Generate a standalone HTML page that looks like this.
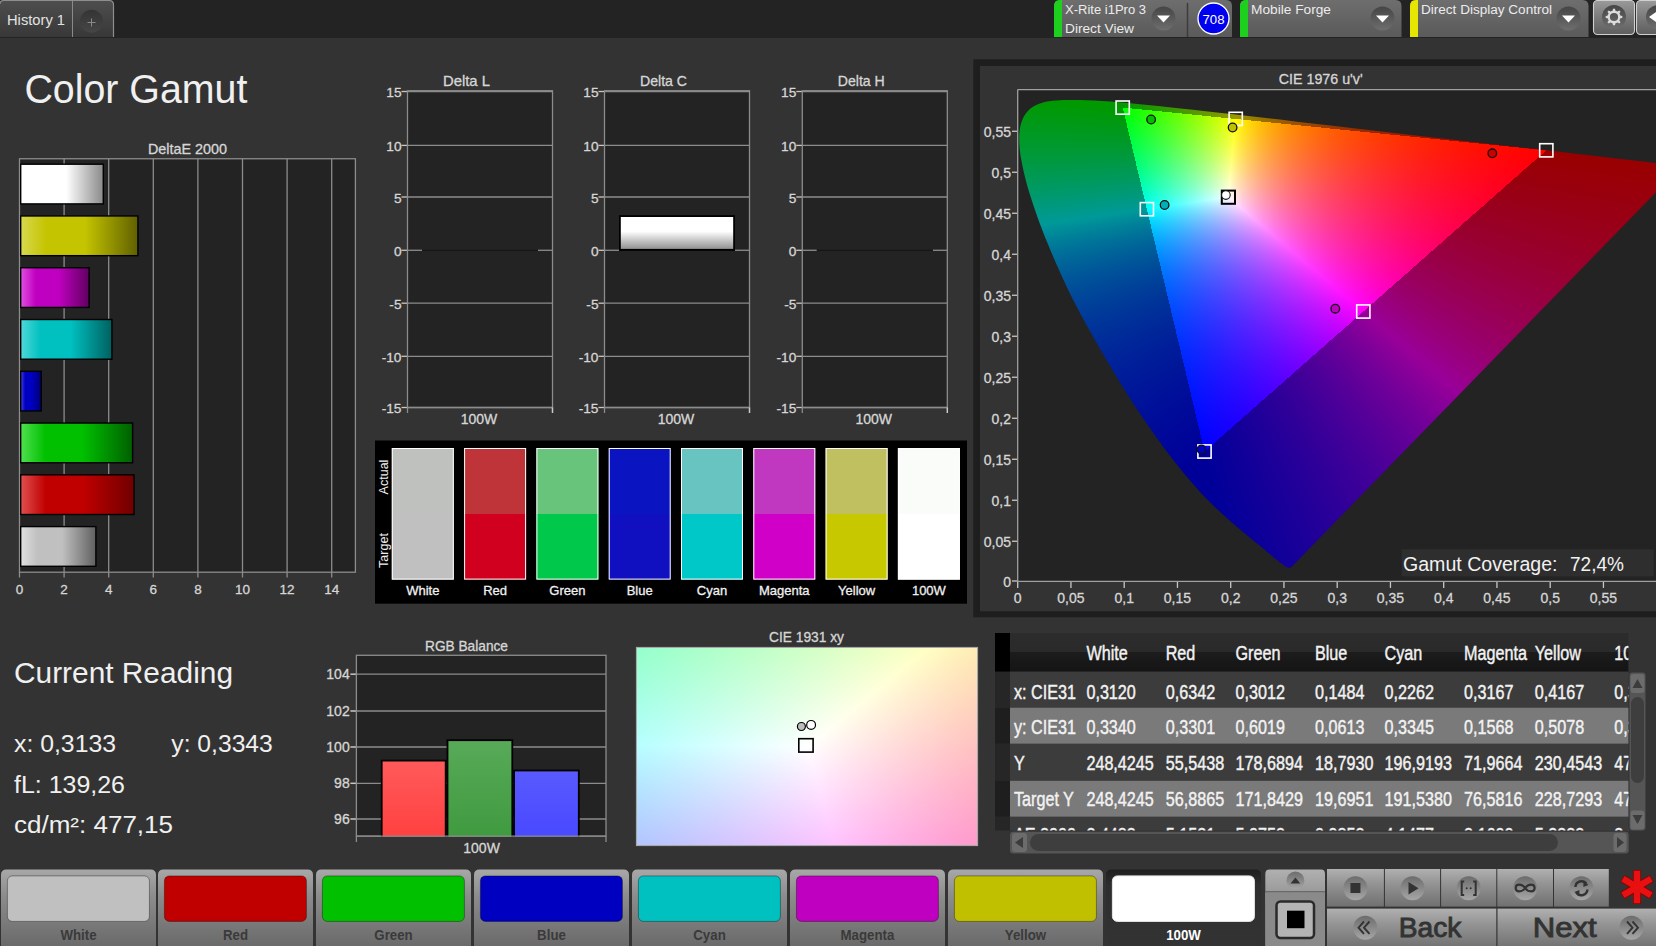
<!DOCTYPE html>
<html><head><meta charset="utf-8"><title>Color Gamut</title>
<style>
html,body{margin:0;padding:0;background:#333333;width:1656px;height:946px;overflow:hidden;}
svg{position:absolute;left:0;top:0;font-family:"Liberation Sans", sans-serif;}
canvas{position:absolute;}
</style></head><body>
<svg width="1656" height="946" viewBox="0 0 1656 946"><defs><linearGradient id="tabg" x1="0" y1="0" x2="0" y2="1"><stop offset="0" stop-color="#4e4e4e"/><stop offset="1" stop-color="#383838"/></linearGradient><radialGradient id="plusg" cx="0.5" cy="0.35" r="0.6"><stop offset="0" stop-color="#3a3a3a"/><stop offset="1" stop-color="#444"/></radialGradient><linearGradient id="plg" x1="0" y1="0" x2="0" y2="1"><stop offset="0" stop-color="#343434"/><stop offset="1" stop-color="#464646"/></linearGradient><linearGradient id="ctlg" x1="0" y1="0" x2="0" y2="1"><stop offset="0" stop-color="#6e6e6e"/><stop offset="1" stop-color="#5a5a5a"/></linearGradient><linearGradient id="ddg" x1="0" y1="0" x2="0" y2="1"><stop offset="0" stop-color="#454545"/><stop offset="1" stop-color="#6e6e6e"/></linearGradient><linearGradient id="btng" x1="0" y1="0" x2="0" y2="1"><stop offset="0" stop-color="#9a9a9a"/><stop offset="0.5" stop-color="#7a7a7a"/><stop offset="1" stop-color="#5e5e5e"/></linearGradient><linearGradient id="bg_white" x1="0" y1="0" x2="1" y2="0"><stop offset="0" stop-color="#ffffff"/><stop offset="0.22" stop-color="#ffffff"/><stop offset="0.55" stop-color="#ffffff"/><stop offset="1" stop-color="#8a8a8a"/></linearGradient><linearGradient id="bg_yellow" x1="0" y1="0" x2="1" y2="0"><stop offset="0" stop-color="#d8d850"/><stop offset="0.22" stop-color="#c4c400"/><stop offset="0.55" stop-color="#c4c400"/><stop offset="1" stop-color="#606000"/></linearGradient><linearGradient id="bg_magenta" x1="0" y1="0" x2="1" y2="0"><stop offset="0" stop-color="#e050e0"/><stop offset="0.22" stop-color="#c000c0"/><stop offset="0.55" stop-color="#c000c0"/><stop offset="1" stop-color="#600060"/></linearGradient><linearGradient id="bg_cyan" x1="0" y1="0" x2="1" y2="0"><stop offset="0" stop-color="#50d8d8"/><stop offset="0.22" stop-color="#00c0c0"/><stop offset="0.55" stop-color="#00c0c0"/><stop offset="1" stop-color="#006060"/></linearGradient><linearGradient id="bg_blue" x1="0" y1="0" x2="1" y2="0"><stop offset="0" stop-color="#4040e0"/><stop offset="0.22" stop-color="#0000c0"/><stop offset="0.55" stop-color="#0000c0"/><stop offset="1" stop-color="#000070"/></linearGradient><linearGradient id="bg_green" x1="0" y1="0" x2="1" y2="0"><stop offset="0" stop-color="#50e050"/><stop offset="0.22" stop-color="#00c000"/><stop offset="0.55" stop-color="#00c000"/><stop offset="1" stop-color="#006000"/></linearGradient><linearGradient id="bg_red" x1="0" y1="0" x2="1" y2="0"><stop offset="0" stop-color="#e05050"/><stop offset="0.22" stop-color="#c00000"/><stop offset="0.55" stop-color="#c00000"/><stop offset="1" stop-color="#700000"/></linearGradient><linearGradient id="bg_grey" x1="0" y1="0" x2="1" y2="0"><stop offset="0" stop-color="#e0e0e0"/><stop offset="0.22" stop-color="#c0c0c0"/><stop offset="0.55" stop-color="#c0c0c0"/><stop offset="1" stop-color="#606060"/></linearGradient><linearGradient id="dcbar" x1="0" y1="0" x2="0" y2="1"><stop offset="0" stop-color="#ffffff"/><stop offset="0.45" stop-color="#ffffff"/><stop offset="1" stop-color="#8c8c8c"/></linearGradient><linearGradient id="rbr" x1="0" y1="0" x2="0" y2="1"><stop offset="0" stop-color="#ff5a5a"/><stop offset="1" stop-color="#ff4040"/></linearGradient><linearGradient id="rbg" x1="0" y1="0" x2="0" y2="1"><stop offset="0" stop-color="#58aa58"/><stop offset="1" stop-color="#3f9a3f"/></linearGradient><linearGradient id="rbb" x1="0" y1="0" x2="0" y2="1"><stop offset="0" stop-color="#5a5aff"/><stop offset="1" stop-color="#4848ff"/></linearGradient><linearGradient id="thg" x1="0" y1="0" x2="0" y2="1"><stop offset="0" stop-color="#2c2c2c"/><stop offset="0.48" stop-color="#2a2a2a"/><stop offset="0.5" stop-color="#1c1c1c"/><stop offset="1" stop-color="#141414"/></linearGradient><clipPath id="tclip"><rect x="1010" y="633" width="618.4000000000001" height="197.5"/></clipPath><linearGradient id="bbg" x1="0" y1="0" x2="0" y2="1"><stop offset="0" stop-color="#a8a8a8"/><stop offset="0.35" stop-color="#8c8c8c"/><stop offset="1" stop-color="#6a6a6a"/></linearGradient><linearGradient id="bbsel" x1="0" y1="0" x2="0" y2="1"><stop offset="0" stop-color="#1e1e1e"/><stop offset="0.2" stop-color="#2e2e2e"/><stop offset="1" stop-color="#333333"/></linearGradient><linearGradient id="navg" x1="0" y1="0" x2="0" y2="1"><stop offset="0" stop-color="#b0b0b0"/><stop offset="0.4" stop-color="#939393"/><stop offset="1" stop-color="#707070"/></linearGradient><radialGradient id="icg" cx="0.5" cy="0.75" r="0.7"><stop offset="0" stop-color="#a8a8a8"/><stop offset="1" stop-color="#6a6a6a"/></radialGradient><linearGradient id="icg2" x1="0" y1="0" x2="0" y2="1"><stop offset="0" stop-color="#6c6c6c"/><stop offset="1" stop-color="#a6a6a6"/></linearGradient><clipPath id="cieclip"><rect x="1017.7" y="89.6" width="638.3" height="491.69999999999993"/></clipPath><clipPath id="locclip"><path d="M1291.2,567.3 L1291.0,567.3 L1290.8,567.6 L1290.4,567.6 L1290.0,567.8 L1289.5,567.8 L1288.8,567.8 L1287.9,567.9 L1286.3,567.1 L1283.5,565.2 L1279.8,562.4 L1274.4,558.0 L1267.6,552.2 L1259.1,545.1 L1247.8,535.9 L1234.3,524.5 L1217.6,509.5 L1197.6,489.2 L1171.1,457.2 L1139.8,413.4 L1105.9,359.0 L1073.2,300.1 L1047.7,243.6 L1030.4,195.9 L1021.4,160.5 L1019.2,135.8 L1022.6,118.9 L1030.8,108.1 L1042.3,102.6 L1056.0,100.6 L1071.0,100.1 L1086.2,100.3 L1102.1,101.0 L1119.2,102.3 L1137.7,104.0 L1158.1,106.0 L1180.8,108.4 L1205.8,111.2 L1233.5,114.4 L1263.9,117.9 L1297.1,121.7 L1332.9,125.8 L1370.8,130.1 L1409.7,134.6 L1447.4,139.0 L1484.1,143.2 L1517.4,147.0 L1546.8,150.4 L1571.8,153.3 L1592.7,155.6 L1610.4,157.7 L1625.7,159.5 L1638.6,161.0 L1649.1,162.1 L1657.2,163.1 L1663.6,163.8 L1668.3,164.3 L1671.4,164.7 L1673.9,165.0 L1675.9,165.2 L1677.9,165.5 L1681.6,165.9 Z"/></clipPath><clipPath id="plotclip"><rect x="1017.7" y="89.6" width="638.3" height="491.69999999999993"/></clipPath><linearGradient id="fbA" gradientUnits="userSpaceOnUse" x1="0.0" y1="100.0" x2="0.0" y2="560.0"><stop offset="0" stop-color="#009900"/><stop offset="0.25" stop-color="#008f80"/><stop offset="0.55" stop-color="#003c99"/><stop offset="1" stop-color="#1a0099"/></linearGradient><linearGradient id="fbB" gradientUnits="userSpaceOnUse" x1="1204.5" y1="451.5" x2="1546.3" y2="150.3"><stop offset="0" stop-color="#0a0099"/><stop offset="0.45" stop-color="#800099"/><stop offset="1" stop-color="#990000"/></linearGradient><linearGradient id="fbC" gradientUnits="userSpaceOnUse" x1="1122.7" y1="107.6" x2="1546.3" y2="150.3"><stop offset="0" stop-color="#009900"/><stop offset="0.3" stop-color="#999900"/><stop offset="1" stop-color="#990000"/></linearGradient><linearGradient id="fbF0" gradientUnits="userSpaceOnUse" x1="1122.7" y1="107.6" x2="1235.7" y2="118.9"><stop offset="0" stop-color="#00ff00"/><stop offset="1" stop-color="#ffff00"/></linearGradient><linearGradient id="fbF1" gradientUnits="userSpaceOnUse" x1="1235.7" y1="118.9" x2="1546.3" y2="150.3"><stop offset="0" stop-color="#ffff00"/><stop offset="1" stop-color="#ff0000"/></linearGradient><linearGradient id="fbF2" gradientUnits="userSpaceOnUse" x1="1546.3" y1="150.3" x2="1363.3" y2="311.5"><stop offset="0" stop-color="#ff0000"/><stop offset="1" stop-color="#ff00ff"/></linearGradient><linearGradient id="fbF3" gradientUnits="userSpaceOnUse" x1="1363.3" y1="311.5" x2="1204.5" y2="451.5"><stop offset="0" stop-color="#ff00ff"/><stop offset="1" stop-color="#0000ff"/></linearGradient><linearGradient id="fbF4" gradientUnits="userSpaceOnUse" x1="1204.5" y1="451.5" x2="1146.9" y2="209.2"><stop offset="0" stop-color="#0000ff"/><stop offset="1" stop-color="#00ffff"/></linearGradient><linearGradient id="fbF5" gradientUnits="userSpaceOnUse" x1="1146.9" y1="209.2" x2="1122.7" y2="107.6"><stop offset="0" stop-color="#00ffff"/><stop offset="1" stop-color="#00ff00"/></linearGradient><radialGradient id="fbW" gradientUnits="userSpaceOnUse" cx="1228.4" cy="197.2" r="110"><stop offset="0" stop-color="#fff" stop-opacity="1"/><stop offset="0.35" stop-color="#fff" stop-opacity="0.55"/><stop offset="1" stop-color="#fff" stop-opacity="0"/></radialGradient><clipPath id="triclip"><path d="M1546.3,150.3 L1122.7,107.6 L1204.5,451.5 Z"/></clipPath><linearGradient id="fb31a" x1="0" y1="0" x2="1" y2="0"><stop offset="0" stop-color="#a8ffff"/><stop offset="0.5" stop-color="#ffffff"/><stop offset="1" stop-color="#ffb8c8"/></linearGradient><linearGradient id="fb31b" x1="0" y1="0" x2="0" y2="1"><stop offset="0" stop-color="#c8ffb8" stop-opacity="0.9"/><stop offset="0.5" stop-color="#ffffff" stop-opacity="0"/><stop offset="1" stop-color="#e0b8ff" stop-opacity="0.7"/></linearGradient></defs><rect x="0" y="0" width="1656" height="38" fill="#232323" /><path d="M0,37 L0,4 Q0,0.5 4,0.5 L109,0.5 Q113.5,0.5 113.5,5 L113.5,37 Z" fill="url(#tabg)"/><path d="M0,4 Q0,0.5 4,0.5 L109,0.5 Q113.5,0.5 113.5,5 L113.5,37" fill="none" stroke="#8e8e8e" stroke-width="1.2"/><line x1="72.5" y1="1" x2="72.5" y2="37" stroke="#8a8a8a" stroke-width="1" /><circle cx="91.5" cy="21.2" r="11.5" fill="url(#plg)"/><line x1="87.5" y1="22.5" x2="95.5" y2="22.5" stroke="#8a8a8a" stroke-width="1" /><line x1="91.5" y1="18.5" x2="91.5" y2="26.5" stroke="#8a8a8a" stroke-width="1" /><text x="7" y="25" font-size="14.8" fill="#e2e2e2" text-anchor="start" textLength="58" lengthAdjust="spacingAndGlyphs" >History 1</text><path d="M1054,37 L1054,6 Q1054,0 1060,0 L1226,0 Q1232,0 1232,6 L1232,37 Z" fill="url(#ctlg)"/><path d="M1054,37 L1054,6 Q1054,0 1060,0 L1062,0 L1062,37 Z" fill="#1ed01e"/><text x="1065" y="13.5" font-size="12.5" fill="#ececec" text-anchor="start" textLength="81" lengthAdjust="spacingAndGlyphs" >X-Rite i1Pro 3</text><text x="1065" y="32.5" font-size="12.5" fill="#ececec" text-anchor="start" textLength="69" lengthAdjust="spacingAndGlyphs" >Direct View</text><circle cx="1163.5" cy="18.5" r="12" fill="url(#ddg)"/><path d="M1157.0,15.5 L1170.0,15.5 L1163.5,22.5 Z" fill="#ffffff"/><line x1="1187.5" y1="3" x2="1187.5" y2="37" stroke="#3c3c3c" stroke-width="1.5" /><circle cx="1213.5" cy="18.5" r="15.5" fill="#0000f0" stroke="#ffffff" stroke-width="1.3"/><text x="1213.5" y="23.5" font-size="13" fill="#ffffff" text-anchor="middle" textLength="22" lengthAdjust="spacingAndGlyphs" >708</text><path d="M1240,37 L1240,6 Q1240,0 1246,0 L1395.5,0 Q1401.5,0 1401.5,6 L1401.5,37 Z" fill="url(#ctlg)"/><path d="M1240,37 L1240,6 Q1240,0 1246,0 L1248,0 L1248,37 Z" fill="#1ed01e"/><text x="1251" y="13.5" font-size="12.5" fill="#ececec" text-anchor="start" textLength="80" lengthAdjust="spacingAndGlyphs" >Mobile Forge</text><circle cx="1382.5" cy="18.5" r="12" fill="url(#ddg)"/><path d="M1376.0,15.5 L1389.0,15.5 L1382.5,22.5 Z" fill="#ffffff"/><path d="M1410,37 L1410,6 Q1410,0 1416,0 L1582.5,0 Q1588.5,0 1588.5,6 L1588.5,37 Z" fill="url(#ctlg)"/><path d="M1410,37 L1410,6 Q1410,0 1416,0 L1418,0 L1418,37 Z" fill="#e6e600"/><text x="1421" y="13.5" font-size="12.5" fill="#ececec" text-anchor="start" textLength="131" lengthAdjust="spacingAndGlyphs" >Direct Display Control</text><circle cx="1568.5" cy="18.5" r="12" fill="url(#ddg)"/><path d="M1562.0,15.5 L1575.0,15.5 L1568.5,22.5 Z" fill="#ffffff"/><rect x="1593.5" y="0.5" width="41" height="34" rx="4" fill="url(#btng)" stroke="#d0d0d0" stroke-width="1.1"/><circle cx="1614" cy="17" r="12" fill="url(#ddg)"/><g transform="translate(1614,17)"><path d="M-1.6,-5 L-1,-8.3 L1,-8.3 L1.6,-5 Z" transform="rotate(0)" fill="#dcdcdc"/><path d="M-1.6,-5 L-1,-8.3 L1,-8.3 L1.6,-5 Z" transform="rotate(45)" fill="#dcdcdc"/><path d="M-1.6,-5 L-1,-8.3 L1,-8.3 L1.6,-5 Z" transform="rotate(90)" fill="#dcdcdc"/><path d="M-1.6,-5 L-1,-8.3 L1,-8.3 L1.6,-5 Z" transform="rotate(135)" fill="#dcdcdc"/><path d="M-1.6,-5 L-1,-8.3 L1,-8.3 L1.6,-5 Z" transform="rotate(180)" fill="#dcdcdc"/><path d="M-1.6,-5 L-1,-8.3 L1,-8.3 L1.6,-5 Z" transform="rotate(225)" fill="#dcdcdc"/><path d="M-1.6,-5 L-1,-8.3 L1,-8.3 L1.6,-5 Z" transform="rotate(270)" fill="#dcdcdc"/><path d="M-1.6,-5 L-1,-8.3 L1,-8.3 L1.6,-5 Z" transform="rotate(315)" fill="#dcdcdc"/><circle r="5.3" fill="none" stroke="#dcdcdc" stroke-width="2.4"/></g><rect x="1636.5" y="0.5" width="30" height="34" rx="4" fill="url(#btng)" stroke="#d0d0d0" stroke-width="1.1"/><circle cx="1658" cy="17" r="12" fill="url(#ddg)"/><path d="M1649,17 L1656,12 L1656,22 Z" fill="#ffffff"/><text x="24.4" y="103" font-size="41.5" fill="#f0f0f0" text-anchor="start" textLength="223" lengthAdjust="spacingAndGlyphs" >Color Gamut</text><text x="187.5" y="153.6" font-size="14.2" fill="#d6d6d6" text-anchor="middle" textLength="79" lengthAdjust="spacingAndGlyphs"  stroke="#d6d6d6" stroke-width="0.3">DeltaE 2000</text><rect x="19.5" y="158.75" width="335.9" height="413.45000000000005" fill="#232323" /><line x1="64.1" y1="158.75" x2="64.1" y2="572.2" stroke="#8c8c8c" stroke-width="1.3" /><line x1="108.7" y1="158.75" x2="108.7" y2="572.2" stroke="#8c8c8c" stroke-width="1.3" /><line x1="153.3" y1="158.75" x2="153.3" y2="572.2" stroke="#8c8c8c" stroke-width="1.3" /><line x1="197.9" y1="158.75" x2="197.9" y2="572.2" stroke="#8c8c8c" stroke-width="1.3" /><line x1="242.5" y1="158.75" x2="242.5" y2="572.2" stroke="#8c8c8c" stroke-width="1.3" /><line x1="287.1" y1="158.75" x2="287.1" y2="572.2" stroke="#8c8c8c" stroke-width="1.3" /><line x1="331.7" y1="158.75" x2="331.7" y2="572.2" stroke="#8c8c8c" stroke-width="1.3" /><rect x="19.5" y="158.75" width="335.9" height="413.45000000000005" fill="none" stroke="#8c8c8c" stroke-width="1.3"/><line x1="19.5" y1="572.2" x2="19.5" y2="577.5" stroke="#8c8c8c" stroke-width="1.3" /><text x="19.5" y="594" font-size="13.5" fill="#d6d6d6" text-anchor="middle"  stroke="#d6d6d6" stroke-width="0.3">0</text><line x1="64.1" y1="572.2" x2="64.1" y2="577.5" stroke="#8c8c8c" stroke-width="1.3" /><text x="64.1" y="594" font-size="13.5" fill="#d6d6d6" text-anchor="middle"  stroke="#d6d6d6" stroke-width="0.3">2</text><line x1="108.7" y1="572.2" x2="108.7" y2="577.5" stroke="#8c8c8c" stroke-width="1.3" /><text x="108.7" y="594" font-size="13.5" fill="#d6d6d6" text-anchor="middle"  stroke="#d6d6d6" stroke-width="0.3">4</text><line x1="153.3" y1="572.2" x2="153.3" y2="577.5" stroke="#8c8c8c" stroke-width="1.3" /><text x="153.3" y="594" font-size="13.5" fill="#d6d6d6" text-anchor="middle"  stroke="#d6d6d6" stroke-width="0.3">6</text><line x1="197.9" y1="572.2" x2="197.9" y2="577.5" stroke="#8c8c8c" stroke-width="1.3" /><text x="197.9" y="594" font-size="13.5" fill="#d6d6d6" text-anchor="middle"  stroke="#d6d6d6" stroke-width="0.3">8</text><line x1="242.5" y1="572.2" x2="242.5" y2="577.5" stroke="#8c8c8c" stroke-width="1.3" /><text x="242.5" y="594" font-size="13.5" fill="#d6d6d6" text-anchor="middle"  stroke="#d6d6d6" stroke-width="0.3">10</text><line x1="287.1" y1="572.2" x2="287.1" y2="577.5" stroke="#8c8c8c" stroke-width="1.3" /><text x="287.1" y="594" font-size="13.5" fill="#d6d6d6" text-anchor="middle"  stroke="#d6d6d6" stroke-width="0.3">12</text><line x1="331.7" y1="572.2" x2="331.7" y2="577.5" stroke="#8c8c8c" stroke-width="1.3" /><text x="331.7" y="594" font-size="13.5" fill="#d6d6d6" text-anchor="middle"  stroke="#d6d6d6" stroke-width="0.3">14</text><rect x="20.7" y="164.2" width="82.6" height="39.7" fill="url(#bg_white)" stroke="#000" stroke-width="1.4"/><rect x="20.7" y="215.97" width="117.19999999999999" height="39.7" fill="url(#bg_yellow)" stroke="#000" stroke-width="1.4"/><rect x="20.7" y="267.74" width="68.39999999999999" height="39.7" fill="url(#bg_magenta)" stroke="#000" stroke-width="1.4"/><rect x="20.7" y="319.51000000000005" width="91.19999999999999" height="39.7" fill="url(#bg_cyan)" stroke="#000" stroke-width="1.4"/><rect x="20.7" y="371.28000000000003" width="20.5" height="39.7" fill="url(#bg_blue)" stroke="#000" stroke-width="1.4"/><rect x="20.7" y="423.05" width="111.9" height="39.7" fill="url(#bg_green)" stroke="#000" stroke-width="1.4"/><rect x="20.7" y="474.82" width="113.29999999999998" height="39.7" fill="url(#bg_red)" stroke="#000" stroke-width="1.4"/><rect x="20.7" y="526.5900000000001" width="75.19999999999999" height="39.7" fill="url(#bg_grey)" stroke="#000" stroke-width="1.4"/><rect x="407.5" y="91.25" width="145" height="316.25" fill="#232323" /><text x="466.5" y="86" font-size="14.5" fill="#d6d6d6" text-anchor="middle" textLength="47" lengthAdjust="spacingAndGlyphs"  stroke="#d6d6d6" stroke-width="0.3">Delta L</text><line x1="407.5" y1="91.5" x2="552.5" y2="91.5" stroke="#8c8c8c" stroke-width="1.3" /><line x1="401.5" y1="91.5" x2="407.5" y2="91.5" stroke="#c8c8c8" stroke-width="1.3" /><text x="401.5" y="97.1" font-size="13.7" fill="#d6d6d6" text-anchor="end"  stroke="#d6d6d6" stroke-width="0.3">15</text><line x1="407.5" y1="145.4" x2="552.5" y2="145.4" stroke="#8c8c8c" stroke-width="1.3" /><line x1="401.5" y1="145.4" x2="407.5" y2="145.4" stroke="#c8c8c8" stroke-width="1.3" /><text x="401.5" y="151.0" font-size="13.7" fill="#d6d6d6" text-anchor="end"  stroke="#d6d6d6" stroke-width="0.3">10</text><line x1="407.5" y1="197.0" x2="552.5" y2="197.0" stroke="#8c8c8c" stroke-width="1.3" /><line x1="401.5" y1="197.0" x2="407.5" y2="197.0" stroke="#c8c8c8" stroke-width="1.3" /><text x="401.5" y="202.6" font-size="13.7" fill="#d6d6d6" text-anchor="end"  stroke="#d6d6d6" stroke-width="0.3">5</text><line x1="407.5" y1="250.3" x2="422.0" y2="250.3" stroke="#8c8c8c" stroke-width="1.3" /><line x1="538.0" y1="250.3" x2="552.5" y2="250.3" stroke="#8c8c8c" stroke-width="1.3" /><line x1="422.0" y1="250.3" x2="538.0" y2="250.3" stroke="#161616" stroke-width="1.3" /><line x1="401.5" y1="250.3" x2="407.5" y2="250.3" stroke="#c8c8c8" stroke-width="1.3" /><text x="401.5" y="255.9" font-size="13.7" fill="#d6d6d6" text-anchor="end"  stroke="#d6d6d6" stroke-width="0.3">0</text><line x1="407.5" y1="303.2" x2="552.5" y2="303.2" stroke="#8c8c8c" stroke-width="1.3" /><line x1="401.5" y1="303.2" x2="407.5" y2="303.2" stroke="#c8c8c8" stroke-width="1.3" /><text x="401.5" y="308.8" font-size="13.7" fill="#d6d6d6" text-anchor="end"  stroke="#d6d6d6" stroke-width="0.3">-5</text><line x1="407.5" y1="356.3" x2="552.5" y2="356.3" stroke="#8c8c8c" stroke-width="1.3" /><line x1="401.5" y1="356.3" x2="407.5" y2="356.3" stroke="#c8c8c8" stroke-width="1.3" /><text x="401.5" y="361.90000000000003" font-size="13.7" fill="#d6d6d6" text-anchor="end"  stroke="#d6d6d6" stroke-width="0.3">-10</text><line x1="407.5" y1="407.5" x2="552.5" y2="407.5" stroke="#8c8c8c" stroke-width="1.3" /><line x1="401.5" y1="407.5" x2="407.5" y2="407.5" stroke="#c8c8c8" stroke-width="1.3" /><text x="401.5" y="413.1" font-size="13.7" fill="#d6d6d6" text-anchor="end"  stroke="#d6d6d6" stroke-width="0.3">-15</text><rect x="407.5" y="90.75" width="145" height="316.75" fill="none" stroke="#8c8c8c" stroke-width="1.3"/><line x1="407.5" y1="407.5" x2="407.5" y2="413" stroke="#8c8c8c" stroke-width="1.3" /><line x1="552.5" y1="407.5" x2="552.5" y2="413" stroke="#c8c8c8" stroke-width="1.5" /><text x="479.0" y="424" font-size="14" fill="#d6d6d6" text-anchor="middle"  stroke="#d6d6d6" stroke-width="0.3">100W</text><rect x="604.5" y="91.25" width="145" height="316.25" fill="#232323" /><text x="663.5" y="86" font-size="14.5" fill="#d6d6d6" text-anchor="middle" textLength="47" lengthAdjust="spacingAndGlyphs"  stroke="#d6d6d6" stroke-width="0.3">Delta C</text><line x1="604.5" y1="91.5" x2="749.5" y2="91.5" stroke="#8c8c8c" stroke-width="1.3" /><line x1="598.5" y1="91.5" x2="604.5" y2="91.5" stroke="#c8c8c8" stroke-width="1.3" /><text x="598.5" y="97.1" font-size="13.7" fill="#d6d6d6" text-anchor="end"  stroke="#d6d6d6" stroke-width="0.3">15</text><line x1="604.5" y1="145.4" x2="749.5" y2="145.4" stroke="#8c8c8c" stroke-width="1.3" /><line x1="598.5" y1="145.4" x2="604.5" y2="145.4" stroke="#c8c8c8" stroke-width="1.3" /><text x="598.5" y="151.0" font-size="13.7" fill="#d6d6d6" text-anchor="end"  stroke="#d6d6d6" stroke-width="0.3">10</text><line x1="604.5" y1="197.0" x2="749.5" y2="197.0" stroke="#8c8c8c" stroke-width="1.3" /><line x1="598.5" y1="197.0" x2="604.5" y2="197.0" stroke="#c8c8c8" stroke-width="1.3" /><text x="598.5" y="202.6" font-size="13.7" fill="#d6d6d6" text-anchor="end"  stroke="#d6d6d6" stroke-width="0.3">5</text><line x1="604.5" y1="250.3" x2="619.0" y2="250.3" stroke="#8c8c8c" stroke-width="1.3" /><line x1="735.0" y1="250.3" x2="749.5" y2="250.3" stroke="#8c8c8c" stroke-width="1.3" /><line x1="619.0" y1="250.3" x2="735.0" y2="250.3" stroke="#161616" stroke-width="1.3" /><line x1="598.5" y1="250.3" x2="604.5" y2="250.3" stroke="#c8c8c8" stroke-width="1.3" /><text x="598.5" y="255.9" font-size="13.7" fill="#d6d6d6" text-anchor="end"  stroke="#d6d6d6" stroke-width="0.3">0</text><line x1="604.5" y1="303.2" x2="749.5" y2="303.2" stroke="#8c8c8c" stroke-width="1.3" /><line x1="598.5" y1="303.2" x2="604.5" y2="303.2" stroke="#c8c8c8" stroke-width="1.3" /><text x="598.5" y="308.8" font-size="13.7" fill="#d6d6d6" text-anchor="end"  stroke="#d6d6d6" stroke-width="0.3">-5</text><line x1="604.5" y1="356.3" x2="749.5" y2="356.3" stroke="#8c8c8c" stroke-width="1.3" /><line x1="598.5" y1="356.3" x2="604.5" y2="356.3" stroke="#c8c8c8" stroke-width="1.3" /><text x="598.5" y="361.90000000000003" font-size="13.7" fill="#d6d6d6" text-anchor="end"  stroke="#d6d6d6" stroke-width="0.3">-10</text><line x1="604.5" y1="407.5" x2="749.5" y2="407.5" stroke="#8c8c8c" stroke-width="1.3" /><line x1="598.5" y1="407.5" x2="604.5" y2="407.5" stroke="#c8c8c8" stroke-width="1.3" /><text x="598.5" y="413.1" font-size="13.7" fill="#d6d6d6" text-anchor="end"  stroke="#d6d6d6" stroke-width="0.3">-15</text><rect x="604.5" y="90.75" width="145" height="316.75" fill="none" stroke="#8c8c8c" stroke-width="1.3"/><line x1="604.5" y1="407.5" x2="604.5" y2="413" stroke="#8c8c8c" stroke-width="1.3" /><line x1="749.5" y1="407.5" x2="749.5" y2="413" stroke="#c8c8c8" stroke-width="1.5" /><text x="676.0" y="424" font-size="14" fill="#d6d6d6" text-anchor="middle"  stroke="#d6d6d6" stroke-width="0.3">100W</text><rect x="802.3" y="91.25" width="145" height="316.25" fill="#232323" /><text x="861.3" y="86" font-size="14.5" fill="#d6d6d6" text-anchor="middle" textLength="47" lengthAdjust="spacingAndGlyphs"  stroke="#d6d6d6" stroke-width="0.3">Delta H</text><line x1="802.3" y1="91.5" x2="947.3" y2="91.5" stroke="#8c8c8c" stroke-width="1.3" /><line x1="796.3" y1="91.5" x2="802.3" y2="91.5" stroke="#c8c8c8" stroke-width="1.3" /><text x="796.3" y="97.1" font-size="13.7" fill="#d6d6d6" text-anchor="end"  stroke="#d6d6d6" stroke-width="0.3">15</text><line x1="802.3" y1="145.4" x2="947.3" y2="145.4" stroke="#8c8c8c" stroke-width="1.3" /><line x1="796.3" y1="145.4" x2="802.3" y2="145.4" stroke="#c8c8c8" stroke-width="1.3" /><text x="796.3" y="151.0" font-size="13.7" fill="#d6d6d6" text-anchor="end"  stroke="#d6d6d6" stroke-width="0.3">10</text><line x1="802.3" y1="197.0" x2="947.3" y2="197.0" stroke="#8c8c8c" stroke-width="1.3" /><line x1="796.3" y1="197.0" x2="802.3" y2="197.0" stroke="#c8c8c8" stroke-width="1.3" /><text x="796.3" y="202.6" font-size="13.7" fill="#d6d6d6" text-anchor="end"  stroke="#d6d6d6" stroke-width="0.3">5</text><line x1="802.3" y1="250.3" x2="816.8" y2="250.3" stroke="#8c8c8c" stroke-width="1.3" /><line x1="932.8" y1="250.3" x2="947.3" y2="250.3" stroke="#8c8c8c" stroke-width="1.3" /><line x1="816.8" y1="250.3" x2="932.8" y2="250.3" stroke="#161616" stroke-width="1.3" /><line x1="796.3" y1="250.3" x2="802.3" y2="250.3" stroke="#c8c8c8" stroke-width="1.3" /><text x="796.3" y="255.9" font-size="13.7" fill="#d6d6d6" text-anchor="end"  stroke="#d6d6d6" stroke-width="0.3">0</text><line x1="802.3" y1="303.2" x2="947.3" y2="303.2" stroke="#8c8c8c" stroke-width="1.3" /><line x1="796.3" y1="303.2" x2="802.3" y2="303.2" stroke="#c8c8c8" stroke-width="1.3" /><text x="796.3" y="308.8" font-size="13.7" fill="#d6d6d6" text-anchor="end"  stroke="#d6d6d6" stroke-width="0.3">-5</text><line x1="802.3" y1="356.3" x2="947.3" y2="356.3" stroke="#8c8c8c" stroke-width="1.3" /><line x1="796.3" y1="356.3" x2="802.3" y2="356.3" stroke="#c8c8c8" stroke-width="1.3" /><text x="796.3" y="361.90000000000003" font-size="13.7" fill="#d6d6d6" text-anchor="end"  stroke="#d6d6d6" stroke-width="0.3">-10</text><line x1="802.3" y1="407.5" x2="947.3" y2="407.5" stroke="#8c8c8c" stroke-width="1.3" /><line x1="796.3" y1="407.5" x2="802.3" y2="407.5" stroke="#c8c8c8" stroke-width="1.3" /><text x="796.3" y="413.1" font-size="13.7" fill="#d6d6d6" text-anchor="end"  stroke="#d6d6d6" stroke-width="0.3">-15</text><rect x="802.3" y="90.75" width="145" height="316.75" fill="none" stroke="#8c8c8c" stroke-width="1.3"/><line x1="802.3" y1="407.5" x2="802.3" y2="413" stroke="#8c8c8c" stroke-width="1.3" /><line x1="947.3" y1="407.5" x2="947.3" y2="413" stroke="#c8c8c8" stroke-width="1.5" /><text x="873.8" y="424" font-size="14" fill="#d6d6d6" text-anchor="middle"  stroke="#d6d6d6" stroke-width="0.3">100W</text><rect x="619.9" y="216.1" width="114.2" height="33.7" fill="url(#dcbar)" stroke="#000" stroke-width="1.8"/><rect x="375" y="440.5" width="592" height="163.2" fill="#000000" /><rect x="391.8" y="448" width="62" height="66" fill="#bfc1bf" /><rect x="391.8" y="514" width="62" height="65.6" fill="#c0c0c0" /><rect x="392.3" y="448.5" width="61" height="130.6" fill="none" stroke="#ffffff" stroke-width="1"/><text x="422.8" y="594.5" font-size="13" fill="#f0f0f0" text-anchor="middle"  stroke="#f0f0f0" stroke-width="0.3">White</text><rect x="464.1" y="448" width="62" height="66" fill="#be3438" /><rect x="464.1" y="514" width="62" height="65.6" fill="#d0001e" /><rect x="464.6" y="448.5" width="61" height="130.6" fill="none" stroke="#ffffff" stroke-width="1"/><text x="495.1" y="594.5" font-size="13" fill="#f0f0f0" text-anchor="middle"  stroke="#f0f0f0" stroke-width="0.3">Red</text><rect x="536.4" y="448" width="62" height="66" fill="#68c47a" /><rect x="536.4" y="514" width="62" height="65.6" fill="#00c84a" /><rect x="536.9" y="448.5" width="61" height="130.6" fill="none" stroke="#ffffff" stroke-width="1"/><text x="567.4" y="594.5" font-size="13" fill="#f0f0f0" text-anchor="middle"  stroke="#f0f0f0" stroke-width="0.3">Green</text><rect x="608.7" y="448" width="62" height="66" fill="#0a14c0" /><rect x="608.7" y="514" width="62" height="65.6" fill="#1010c0" /><rect x="609.2" y="448.5" width="61" height="130.6" fill="none" stroke="#ffffff" stroke-width="1"/><text x="639.7" y="594.5" font-size="13" fill="#f0f0f0" text-anchor="middle"  stroke="#f0f0f0" stroke-width="0.3">Blue</text><rect x="681.0" y="448" width="62" height="66" fill="#68c4c0" /><rect x="681.0" y="514" width="62" height="65.6" fill="#00c8c8" /><rect x="681.5" y="448.5" width="61" height="130.6" fill="none" stroke="#ffffff" stroke-width="1"/><text x="712.0" y="594.5" font-size="13" fill="#f0f0f0" text-anchor="middle"  stroke="#f0f0f0" stroke-width="0.3">Cyan</text><rect x="753.3" y="448" width="62" height="66" fill="#c038c0" /><rect x="753.3" y="514" width="62" height="65.6" fill="#d000c8" /><rect x="753.8" y="448.5" width="61" height="130.6" fill="none" stroke="#ffffff" stroke-width="1"/><text x="784.3" y="594.5" font-size="13" fill="#f0f0f0" text-anchor="middle"  stroke="#f0f0f0" stroke-width="0.3">Magenta</text><rect x="825.5999999999999" y="448" width="62" height="66" fill="#c0c060" /><rect x="825.5999999999999" y="514" width="62" height="65.6" fill="#c8c800" /><rect x="826.0999999999999" y="448.5" width="61" height="130.6" fill="none" stroke="#ffffff" stroke-width="1"/><text x="856.5999999999999" y="594.5" font-size="13" fill="#f0f0f0" text-anchor="middle"  stroke="#f0f0f0" stroke-width="0.3">Yellow</text><rect x="897.9" y="448" width="62" height="66" fill="#fafcfa" /><rect x="897.9" y="514" width="62" height="65.6" fill="#ffffff" /><rect x="898.4" y="448.5" width="61" height="130.6" fill="none" stroke="#ffffff" stroke-width="1"/><text x="928.9" y="594.5" font-size="13" fill="#f0f0f0" text-anchor="middle"  stroke="#f0f0f0" stroke-width="0.3">100W</text><text transform="translate(388,477) rotate(-90)" font-size="12.5" fill="#f0f0f0" text-anchor="middle">Actual</text><text transform="translate(388,550.5) rotate(-90)" font-size="12.5" fill="#f0f0f0" text-anchor="middle">Target</text><rect x="973.3" y="59.3" width="700" height="558" fill="#1e1e1e" /><rect x="980" y="66" width="700" height="545.3" fill="#333333" /><text x="1320.7" y="84" font-size="14.2" fill="#d6d6d6" text-anchor="middle" textLength="84" lengthAdjust="spacingAndGlyphs"  stroke="#d6d6d6" stroke-width="0.3">CIE 1976 u'v'</text><line x1="1012" y1="581.0" x2="1017.7" y2="581.0" stroke="#c8c8c8" stroke-width="1.3" /><text x="1011" y="587.0" font-size="14" fill="#d6d6d6" text-anchor="end"  stroke="#d6d6d6" stroke-width="0.3">0</text><line x1="1012" y1="541.25" x2="1017.7" y2="541.25" stroke="#c8c8c8" stroke-width="1.3" /><text x="1011" y="547.25" font-size="14" fill="#d6d6d6" text-anchor="end"  stroke="#d6d6d6" stroke-width="0.3">0,05</text><line x1="1012" y1="500.25" x2="1017.7" y2="500.25" stroke="#c8c8c8" stroke-width="1.3" /><text x="1011" y="506.25" font-size="14" fill="#d6d6d6" text-anchor="end"  stroke="#d6d6d6" stroke-width="0.3">0,1</text><line x1="1012" y1="459.25" x2="1017.7" y2="459.25" stroke="#c8c8c8" stroke-width="1.3" /><text x="1011" y="465.25" font-size="14" fill="#d6d6d6" text-anchor="end"  stroke="#d6d6d6" stroke-width="0.3">0,15</text><line x1="1012" y1="418.25" x2="1017.7" y2="418.25" stroke="#c8c8c8" stroke-width="1.3" /><text x="1011" y="424.25" font-size="14" fill="#d6d6d6" text-anchor="end"  stroke="#d6d6d6" stroke-width="0.3">0,2</text><line x1="1012" y1="377.25" x2="1017.7" y2="377.25" stroke="#c8c8c8" stroke-width="1.3" /><text x="1011" y="383.25" font-size="14" fill="#d6d6d6" text-anchor="end"  stroke="#d6d6d6" stroke-width="0.3">0,25</text><line x1="1012" y1="336.25" x2="1017.7" y2="336.25" stroke="#c8c8c8" stroke-width="1.3" /><text x="1011" y="342.25" font-size="14" fill="#d6d6d6" text-anchor="end"  stroke="#d6d6d6" stroke-width="0.3">0,3</text><line x1="1012" y1="295.25" x2="1017.7" y2="295.25" stroke="#c8c8c8" stroke-width="1.3" /><text x="1011" y="301.25" font-size="14" fill="#d6d6d6" text-anchor="end"  stroke="#d6d6d6" stroke-width="0.3">0,35</text><line x1="1012" y1="254.25" x2="1017.7" y2="254.25" stroke="#c8c8c8" stroke-width="1.3" /><text x="1011" y="260.25" font-size="14" fill="#d6d6d6" text-anchor="end"  stroke="#d6d6d6" stroke-width="0.3">0,4</text><line x1="1012" y1="213.25" x2="1017.7" y2="213.25" stroke="#c8c8c8" stroke-width="1.3" /><text x="1011" y="219.25" font-size="14" fill="#d6d6d6" text-anchor="end"  stroke="#d6d6d6" stroke-width="0.3">0,45</text><line x1="1012" y1="172.25" x2="1017.7" y2="172.25" stroke="#c8c8c8" stroke-width="1.3" /><text x="1011" y="178.25" font-size="14" fill="#d6d6d6" text-anchor="end"  stroke="#d6d6d6" stroke-width="0.3">0,5</text><line x1="1012" y1="131.25" x2="1017.7" y2="131.25" stroke="#c8c8c8" stroke-width="1.3" /><text x="1011" y="137.25" font-size="14" fill="#d6d6d6" text-anchor="end"  stroke="#d6d6d6" stroke-width="0.3">0,55</text><line x1="1017.7" y1="581.3" x2="1017.7" y2="587.9" stroke="#c8c8c8" stroke-width="1.3" /><text x="1017.7" y="602.7" font-size="14" fill="#d6d6d6" text-anchor="middle"  stroke="#d6d6d6" stroke-width="0.3">0</text><line x1="1070.95" y1="581.3" x2="1070.95" y2="587.9" stroke="#c8c8c8" stroke-width="1.3" /><text x="1070.95" y="602.7" font-size="14" fill="#d6d6d6" text-anchor="middle"  stroke="#d6d6d6" stroke-width="0.3">0,05</text><line x1="1124.2" y1="581.3" x2="1124.2" y2="587.9" stroke="#c8c8c8" stroke-width="1.3" /><text x="1124.2" y="602.7" font-size="14" fill="#d6d6d6" text-anchor="middle"  stroke="#d6d6d6" stroke-width="0.3">0,1</text><line x1="1177.45" y1="581.3" x2="1177.45" y2="587.9" stroke="#c8c8c8" stroke-width="1.3" /><text x="1177.45" y="602.7" font-size="14" fill="#d6d6d6" text-anchor="middle"  stroke="#d6d6d6" stroke-width="0.3">0,15</text><line x1="1230.7" y1="581.3" x2="1230.7" y2="587.9" stroke="#c8c8c8" stroke-width="1.3" /><text x="1230.7" y="602.7" font-size="14" fill="#d6d6d6" text-anchor="middle"  stroke="#d6d6d6" stroke-width="0.3">0,2</text><line x1="1283.95" y1="581.3" x2="1283.95" y2="587.9" stroke="#c8c8c8" stroke-width="1.3" /><text x="1283.95" y="602.7" font-size="14" fill="#d6d6d6" text-anchor="middle"  stroke="#d6d6d6" stroke-width="0.3">0,25</text><line x1="1337.2" y1="581.3" x2="1337.2" y2="587.9" stroke="#c8c8c8" stroke-width="1.3" /><text x="1337.2" y="602.7" font-size="14" fill="#d6d6d6" text-anchor="middle"  stroke="#d6d6d6" stroke-width="0.3">0,3</text><line x1="1390.45" y1="581.3" x2="1390.45" y2="587.9" stroke="#c8c8c8" stroke-width="1.3" /><text x="1390.45" y="602.7" font-size="14" fill="#d6d6d6" text-anchor="middle"  stroke="#d6d6d6" stroke-width="0.3">0,35</text><line x1="1443.7" y1="581.3" x2="1443.7" y2="587.9" stroke="#c8c8c8" stroke-width="1.3" /><text x="1443.7" y="602.7" font-size="14" fill="#d6d6d6" text-anchor="middle"  stroke="#d6d6d6" stroke-width="0.3">0,4</text><line x1="1496.95" y1="581.3" x2="1496.95" y2="587.9" stroke="#c8c8c8" stroke-width="1.3" /><text x="1496.95" y="602.7" font-size="14" fill="#d6d6d6" text-anchor="middle"  stroke="#d6d6d6" stroke-width="0.3">0,45</text><line x1="1550.2" y1="581.3" x2="1550.2" y2="587.9" stroke="#c8c8c8" stroke-width="1.3" /><text x="1550.2" y="602.7" font-size="14" fill="#d6d6d6" text-anchor="middle"  stroke="#d6d6d6" stroke-width="0.3">0,5</text><line x1="1603.45" y1="581.3" x2="1603.45" y2="587.9" stroke="#c8c8c8" stroke-width="1.3" /><text x="1603.45" y="602.7" font-size="14" fill="#d6d6d6" text-anchor="middle"  stroke="#d6d6d6" stroke-width="0.3">0,55</text><text x="14" y="683" font-size="29" fill="#f0f0f0" text-anchor="start" textLength="219" lengthAdjust="spacingAndGlyphs" >Current Reading</text><text x="14" y="752" font-size="23" fill="#f0f0f0" text-anchor="start" textLength="102" lengthAdjust="spacingAndGlyphs" >x: 0,3133</text><text x="171.3" y="752" font-size="23" fill="#f0f0f0" text-anchor="start" textLength="101.5" lengthAdjust="spacingAndGlyphs" >y: 0,3343</text><text x="14" y="793.3" font-size="23" fill="#f0f0f0" text-anchor="start" textLength="111" lengthAdjust="spacingAndGlyphs" >fL: 139,26</text><text x="14" y="832.7" font-size="23" fill="#f0f0f0" text-anchor="start" textLength="159" lengthAdjust="spacingAndGlyphs" >cd/m²: 477,15</text><text x="466.5" y="651" font-size="14.2" fill="#d6d6d6" text-anchor="middle" textLength="83" lengthAdjust="spacingAndGlyphs"  stroke="#d6d6d6" stroke-width="0.3">RGB Balance</text><rect x="356.4" y="655.3" width="249.60000000000002" height="180.9000000000001" fill="#232323" /><line x1="356.4" y1="674.2" x2="606" y2="674.2" stroke="#8c8c8c" stroke-width="1.3" /><line x1="350.4" y1="674.2" x2="356.4" y2="674.2" stroke="#c8c8c8" stroke-width="1.5" /><text x="349.7" y="679.2" font-size="14" fill="#d6d6d6" text-anchor="end"  stroke="#d6d6d6" stroke-width="0.3">104</text><line x1="356.4" y1="711" x2="606" y2="711" stroke="#8c8c8c" stroke-width="1.3" /><line x1="350.4" y1="711" x2="356.4" y2="711" stroke="#c8c8c8" stroke-width="1.5" /><text x="349.7" y="716" font-size="14" fill="#d6d6d6" text-anchor="end"  stroke="#d6d6d6" stroke-width="0.3">102</text><line x1="356.4" y1="747" x2="606" y2="747" stroke="#8c8c8c" stroke-width="1.3" /><line x1="350.4" y1="747" x2="356.4" y2="747" stroke="#c8c8c8" stroke-width="1.5" /><text x="349.7" y="752" font-size="14" fill="#d6d6d6" text-anchor="end"  stroke="#d6d6d6" stroke-width="0.3">100</text><line x1="356.4" y1="783.3" x2="606" y2="783.3" stroke="#8c8c8c" stroke-width="1.3" /><line x1="350.4" y1="783.3" x2="356.4" y2="783.3" stroke="#c8c8c8" stroke-width="1.5" /><text x="349.7" y="788.3" font-size="14" fill="#d6d6d6" text-anchor="end"  stroke="#d6d6d6" stroke-width="0.3">98</text><line x1="356.4" y1="819" x2="606" y2="819" stroke="#8c8c8c" stroke-width="1.3" /><line x1="350.4" y1="819" x2="356.4" y2="819" stroke="#c8c8c8" stroke-width="1.5" /><text x="349.7" y="824" font-size="14" fill="#d6d6d6" text-anchor="end"  stroke="#d6d6d6" stroke-width="0.3">96</text><rect x="356.4" y="655.3" width="249.60000000000002" height="180.9000000000001" fill="none" stroke="#8c8c8c" stroke-width="1.3"/><line x1="356.4" y1="836.2" x2="356.4" y2="842" stroke="#8c8c8c" stroke-width="1.3" /><line x1="606" y1="836.2" x2="606" y2="842" stroke="#8c8c8c" stroke-width="1.3" /><text x="481.6" y="852.5" font-size="14" fill="#d6d6d6" text-anchor="middle"  stroke="#d6d6d6" stroke-width="0.3">100W</text><rect x="381.7" y="760.6" width="64.00000000000001" height="78.5" fill="url(#rbr)" stroke="#000" stroke-width="1.8"/><rect x="447.5" y="740.1999999999999" width="64.80000000000003" height="98.90000000000009" fill="url(#rbg)" stroke="#000" stroke-width="1.8"/><rect x="514.1" y="770.5" width="64.7" height="68.60000000000002" fill="url(#rbb)" stroke="#000" stroke-width="1.8"/><rect x="354.4" y="836.85" width="253.60000000000002" height="5" fill="#333333"/><line x1="356.4" y1="836.2" x2="606" y2="836.2" stroke="#8c8c8c" stroke-width="1.3" /><line x1="356.4" y1="836.2" x2="356.4" y2="842" stroke="#8c8c8c" stroke-width="1.3" /><line x1="606" y1="836.2" x2="606" y2="842" stroke="#8c8c8c" stroke-width="1.3" /><text x="806.5" y="642" font-size="14.2" fill="#d6d6d6" text-anchor="middle" textLength="75" lengthAdjust="spacingAndGlyphs"  stroke="#d6d6d6" stroke-width="0.3">CIE 1931 xy</text><rect x="636.5" y="647.5" width="341" height="198" fill="none" stroke="#a8a8a8" stroke-width="1.2"/><rect x="995" y="633" width="633.4000000000001" height="38.700000000000045" fill="url(#thg)" /><rect x="995" y="633" width="15" height="38.700000000000045" fill="#000000" /><rect x="1010" y="671.7" width="618.4000000000001" height="36.0" fill="#3c3c3c" /><rect x="995" y="671.7" width="15" height="36.0" fill="#262626" /><rect x="1010" y="707.7" width="618.4000000000001" height="36.09999999999991" fill="#7a7a7a" /><rect x="995" y="707.7" width="15" height="36.09999999999991" fill="#1e1e1e" /><rect x="1010" y="743.8" width="618.4000000000001" height="37.0" fill="#3c3c3c" /><rect x="995" y="743.8" width="15" height="37.0" fill="#262626" /><rect x="1010" y="780.8" width="618.4000000000001" height="36.0" fill="#7a7a7a" /><rect x="995" y="780.8" width="15" height="36.0" fill="#1e1e1e" /><rect x="1010" y="816.8" width="618.4000000000001" height="13.700000000000045" fill="#3c3c3c" /><rect x="995" y="816.8" width="15" height="13.700000000000045" fill="#262626" /><g clip-path="url(#tclip)"><text transform="translate(1086.4,659.8) scale(0.77,1)" font-size="21" fill="#f2f2f2" text-anchor="start"  stroke="#f2f2f2" stroke-width="0.45">White</text><text transform="translate(1165.7,659.8) scale(0.77,1)" font-size="21" fill="#f2f2f2" text-anchor="start"  stroke="#f2f2f2" stroke-width="0.45">Red</text><text transform="translate(1235.5,659.8) scale(0.77,1)" font-size="21" fill="#f2f2f2" text-anchor="start"  stroke="#f2f2f2" stroke-width="0.45">Green</text><text transform="translate(1315,659.8) scale(0.77,1)" font-size="21" fill="#f2f2f2" text-anchor="start"  stroke="#f2f2f2" stroke-width="0.45">Blue</text><text transform="translate(1384.5,659.8) scale(0.77,1)" font-size="21" fill="#f2f2f2" text-anchor="start"  stroke="#f2f2f2" stroke-width="0.45">Cyan</text><text transform="translate(1464,659.8) scale(0.77,1)" font-size="21" fill="#f2f2f2" text-anchor="start"  stroke="#f2f2f2" stroke-width="0.45">Magenta</text><text transform="translate(1534.8,659.8) scale(0.77,1)" font-size="21" fill="#f2f2f2" text-anchor="start"  stroke="#f2f2f2" stroke-width="0.45">Yellow</text><text transform="translate(1614.3,659.8) scale(0.77,1)" font-size="21" fill="#f2f2f2" text-anchor="start"  stroke="#f2f2f2" stroke-width="0.45">100W</text><text transform="translate(1014,698.8) scale(0.77,1)" font-size="21" fill="#f2f2f2" text-anchor="start"  stroke="#f2f2f2" stroke-width="0.45">x: CIE31</text><text transform="translate(1086.4,698.8) scale(0.77,1)" font-size="21" fill="#f2f2f2" text-anchor="start"  stroke="#f2f2f2" stroke-width="0.45">0,3120</text><text transform="translate(1165.7,698.8) scale(0.77,1)" font-size="21" fill="#f2f2f2" text-anchor="start"  stroke="#f2f2f2" stroke-width="0.45">0,6342</text><text transform="translate(1235.5,698.8) scale(0.77,1)" font-size="21" fill="#f2f2f2" text-anchor="start"  stroke="#f2f2f2" stroke-width="0.45">0,3012</text><text transform="translate(1315,698.8) scale(0.77,1)" font-size="21" fill="#f2f2f2" text-anchor="start"  stroke="#f2f2f2" stroke-width="0.45">0,1484</text><text transform="translate(1384.5,698.8) scale(0.77,1)" font-size="21" fill="#f2f2f2" text-anchor="start"  stroke="#f2f2f2" stroke-width="0.45">0,2262</text><text transform="translate(1464,698.8) scale(0.77,1)" font-size="21" fill="#f2f2f2" text-anchor="start"  stroke="#f2f2f2" stroke-width="0.45">0,3167</text><text transform="translate(1534.8,698.8) scale(0.77,1)" font-size="21" fill="#f2f2f2" text-anchor="start"  stroke="#f2f2f2" stroke-width="0.45">0,4167</text><text transform="translate(1614.3,698.8) scale(0.77,1)" font-size="21" fill="#f2f2f2" text-anchor="start"  stroke="#f2f2f2" stroke-width="0.45">0,3133</text><text transform="translate(1014,734.3) scale(0.77,1)" font-size="21" fill="#f2f2f2" text-anchor="start"  stroke="#f2f2f2" stroke-width="0.45">y: CIE31</text><text transform="translate(1086.4,734.3) scale(0.77,1)" font-size="21" fill="#f2f2f2" text-anchor="start"  stroke="#f2f2f2" stroke-width="0.45">0,3340</text><text transform="translate(1165.7,734.3) scale(0.77,1)" font-size="21" fill="#f2f2f2" text-anchor="start"  stroke="#f2f2f2" stroke-width="0.45">0,3301</text><text transform="translate(1235.5,734.3) scale(0.77,1)" font-size="21" fill="#f2f2f2" text-anchor="start"  stroke="#f2f2f2" stroke-width="0.45">0,6019</text><text transform="translate(1315,734.3) scale(0.77,1)" font-size="21" fill="#f2f2f2" text-anchor="start"  stroke="#f2f2f2" stroke-width="0.45">0,0613</text><text transform="translate(1384.5,734.3) scale(0.77,1)" font-size="21" fill="#f2f2f2" text-anchor="start"  stroke="#f2f2f2" stroke-width="0.45">0,3345</text><text transform="translate(1464,734.3) scale(0.77,1)" font-size="21" fill="#f2f2f2" text-anchor="start"  stroke="#f2f2f2" stroke-width="0.45">0,1568</text><text transform="translate(1534.8,734.3) scale(0.77,1)" font-size="21" fill="#f2f2f2" text-anchor="start"  stroke="#f2f2f2" stroke-width="0.45">0,5078</text><text transform="translate(1614.3,734.3) scale(0.77,1)" font-size="21" fill="#f2f2f2" text-anchor="start"  stroke="#f2f2f2" stroke-width="0.45">0,3343</text><text transform="translate(1014,770.4) scale(0.77,1)" font-size="21" fill="#f2f2f2" text-anchor="start"  stroke="#f2f2f2" stroke-width="0.45">Y</text><text transform="translate(1086.4,770.4) scale(0.77,1)" font-size="21" fill="#f2f2f2" text-anchor="start"  stroke="#f2f2f2" stroke-width="0.45">248,4245</text><text transform="translate(1165.7,770.4) scale(0.77,1)" font-size="21" fill="#f2f2f2" text-anchor="start"  stroke="#f2f2f2" stroke-width="0.45">55,5438</text><text transform="translate(1235.5,770.4) scale(0.77,1)" font-size="21" fill="#f2f2f2" text-anchor="start"  stroke="#f2f2f2" stroke-width="0.45">178,6894</text><text transform="translate(1315,770.4) scale(0.77,1)" font-size="21" fill="#f2f2f2" text-anchor="start"  stroke="#f2f2f2" stroke-width="0.45">18,7930</text><text transform="translate(1384.5,770.4) scale(0.77,1)" font-size="21" fill="#f2f2f2" text-anchor="start"  stroke="#f2f2f2" stroke-width="0.45">196,9193</text><text transform="translate(1464,770.4) scale(0.77,1)" font-size="21" fill="#f2f2f2" text-anchor="start"  stroke="#f2f2f2" stroke-width="0.45">71,9664</text><text transform="translate(1534.8,770.4) scale(0.77,1)" font-size="21" fill="#f2f2f2" text-anchor="start"  stroke="#f2f2f2" stroke-width="0.45">230,4543</text><text transform="translate(1614.3,770.4) scale(0.77,1)" font-size="21" fill="#f2f2f2" text-anchor="start"  stroke="#f2f2f2" stroke-width="0.45">477,15</text><text transform="translate(1014,806.4) scale(0.77,1)" font-size="21" fill="#f2f2f2" text-anchor="start"  stroke="#f2f2f2" stroke-width="0.45">Target Y</text><text transform="translate(1086.4,806.4) scale(0.77,1)" font-size="21" fill="#f2f2f2" text-anchor="start"  stroke="#f2f2f2" stroke-width="0.45">248,4245</text><text transform="translate(1165.7,806.4) scale(0.77,1)" font-size="21" fill="#f2f2f2" text-anchor="start"  stroke="#f2f2f2" stroke-width="0.45">56,8865</text><text transform="translate(1235.5,806.4) scale(0.77,1)" font-size="21" fill="#f2f2f2" text-anchor="start"  stroke="#f2f2f2" stroke-width="0.45">171,8429</text><text transform="translate(1315,806.4) scale(0.77,1)" font-size="21" fill="#f2f2f2" text-anchor="start"  stroke="#f2f2f2" stroke-width="0.45">19,6951</text><text transform="translate(1384.5,806.4) scale(0.77,1)" font-size="21" fill="#f2f2f2" text-anchor="start"  stroke="#f2f2f2" stroke-width="0.45">191,5380</text><text transform="translate(1464,806.4) scale(0.77,1)" font-size="21" fill="#f2f2f2" text-anchor="start"  stroke="#f2f2f2" stroke-width="0.45">76,5816</text><text transform="translate(1534.8,806.4) scale(0.77,1)" font-size="21" fill="#f2f2f2" text-anchor="start"  stroke="#f2f2f2" stroke-width="0.45">228,7293</text><text transform="translate(1614.3,806.4) scale(0.77,1)" font-size="21" fill="#f2f2f2" text-anchor="start"  stroke="#f2f2f2" stroke-width="0.45">477,15</text><text transform="translate(1014,842.4) scale(0.77,1)" font-size="21" fill="#f2f2f2" text-anchor="start"  stroke="#f2f2f2" stroke-width="0.45">ΔE 2000</text><text transform="translate(1086.4,842.4) scale(0.77,1)" font-size="21" fill="#f2f2f2" text-anchor="start"  stroke="#f2f2f2" stroke-width="0.45">3,4483</text><text transform="translate(1165.7,842.4) scale(0.77,1)" font-size="21" fill="#f2f2f2" text-anchor="start"  stroke="#f2f2f2" stroke-width="0.45">5,1521</text><text transform="translate(1235.5,842.4) scale(0.77,1)" font-size="21" fill="#f2f2f2" text-anchor="start"  stroke="#f2f2f2" stroke-width="0.45">5,0753</text><text transform="translate(1315,842.4) scale(0.77,1)" font-size="21" fill="#f2f2f2" text-anchor="start"  stroke="#f2f2f2" stroke-width="0.45">0,9853</text><text transform="translate(1384.5,842.4) scale(0.77,1)" font-size="21" fill="#f2f2f2" text-anchor="start"  stroke="#f2f2f2" stroke-width="0.45">4,1477</text><text transform="translate(1464,842.4) scale(0.77,1)" font-size="21" fill="#f2f2f2" text-anchor="start"  stroke="#f2f2f2" stroke-width="0.45">3,1600</text><text transform="translate(1534.8,842.4) scale(0.77,1)" font-size="21" fill="#f2f2f2" text-anchor="start"  stroke="#f2f2f2" stroke-width="0.45">5,3323</text><text transform="translate(1614.3,842.4) scale(0.77,1)" font-size="21" fill="#f2f2f2" text-anchor="start"  stroke="#f2f2f2" stroke-width="0.45">3,3</text></g><rect x="1629.5" y="672.5" width="16" height="158" rx="3" fill="#555555"/><rect x="1630.5" y="674" width="14" height="19" rx="3" fill="#6c6c6c"/><path d="M1632.5,688 L1637.5,679 L1642.5,688 Z" fill="#3c3c3c"/><rect x="1631" y="697" width="13" height="86" rx="6.5" fill="#3e3e3e"/><rect x="1630.5" y="810.5" width="14" height="19" rx="3" fill="#6c6c6c"/><path d="M1632.5,815 L1637.5,824 L1642.5,815 Z" fill="#3c3c3c"/><rect x="1010" y="831.7" width="618.7" height="21.7" rx="3" fill="#555555"/><rect x="1012" y="833" width="15" height="19" rx="3" fill="#6c6c6c"/><path d="M1023,837 L1015,842.5 L1023,848 Z" fill="#3c3c3c"/><rect x="1030" y="834" width="528" height="17" rx="8.5" fill="#3e3e3e"/><rect x="1613.5" y="833" width="13" height="19" rx="3" fill="#6c6c6c"/><path d="M1617,837 L1624,842.5 L1617,848 Z" fill="#3c3c3c"/><path d="M1,946 L1,875 Q1,869.5 6.5,869.5 L150.5,869.5 Q156,869.5 156,875 L156,946 Z" fill="url(#bbg)"/><rect x="7.4" y="875.9" width="142" height="45.5" rx="5" fill="#c0c0c0" stroke="rgba(0,0,0,0.35)" stroke-width="1"/><text transform="translate(78.5,940) scale(0.95,1)" font-size="14" fill="#3a3a3a" text-anchor="middle" font-weight="700" >White</text><path d="M158,946 L158,875 Q158,869.5 163.5,869.5 L307.5,869.5 Q313,869.5 313,875 L313,946 Z" fill="url(#bbg)"/><rect x="164.4" y="875.9" width="142" height="45.5" rx="5" fill="#c00000" stroke="rgba(0,0,0,0.35)" stroke-width="1"/><text transform="translate(235.5,940) scale(0.95,1)" font-size="14" fill="#3a3a3a" text-anchor="middle" font-weight="700" >Red</text><path d="M316,946 L316,875 Q316,869.5 321.5,869.5 L465.5,869.5 Q471,869.5 471,875 L471,946 Z" fill="url(#bbg)"/><rect x="322.4" y="875.9" width="142" height="45.5" rx="5" fill="#00c000" stroke="rgba(0,0,0,0.35)" stroke-width="1"/><text transform="translate(393.5,940) scale(0.95,1)" font-size="14" fill="#3a3a3a" text-anchor="middle" font-weight="700" >Green</text><path d="M474,946 L474,875 Q474,869.5 479.5,869.5 L623.5,869.5 Q629,869.5 629,875 L629,946 Z" fill="url(#bbg)"/><rect x="480.4" y="875.9" width="142" height="45.5" rx="5" fill="#0000c0" stroke="rgba(0,0,0,0.35)" stroke-width="1"/><text transform="translate(551.5,940) scale(0.95,1)" font-size="14" fill="#3a3a3a" text-anchor="middle" font-weight="700" >Blue</text><path d="M632,946 L632,875 Q632,869.5 637.5,869.5 L781.5,869.5 Q787,869.5 787,875 L787,946 Z" fill="url(#bbg)"/><rect x="638.4" y="875.9" width="142" height="45.5" rx="5" fill="#00c0c0" stroke="rgba(0,0,0,0.35)" stroke-width="1"/><text transform="translate(709.5,940) scale(0.95,1)" font-size="14" fill="#3a3a3a" text-anchor="middle" font-weight="700" >Cyan</text><path d="M790,946 L790,875 Q790,869.5 795.5,869.5 L939.5,869.5 Q945,869.5 945,875 L945,946 Z" fill="url(#bbg)"/><rect x="796.4" y="875.9" width="142" height="45.5" rx="5" fill="#c000c0" stroke="rgba(0,0,0,0.35)" stroke-width="1"/><text transform="translate(867.5,940) scale(0.95,1)" font-size="14" fill="#3a3a3a" text-anchor="middle" font-weight="700" >Magenta</text><path d="M948,946 L948,875 Q948,869.5 953.5,869.5 L1097.5,869.5 Q1103,869.5 1103,875 L1103,946 Z" fill="url(#bbg)"/><rect x="954.4" y="875.9" width="142" height="45.5" rx="5" fill="#c0c000" stroke="rgba(0,0,0,0.35)" stroke-width="1"/><text transform="translate(1025.5,940) scale(0.95,1)" font-size="14" fill="#3a3a3a" text-anchor="middle" font-weight="700" >Yellow</text><path d="M1106,946 L1106,875 Q1106,869.5 1111.5,869.5 L1255.5,869.5 Q1261,869.5 1261,875 L1261,946 Z" fill="url(#bbsel)"/><rect x="1112.4" y="875.9" width="142" height="45.5" rx="5" fill="#ffffff" stroke="#e8e8e8" stroke-width="1"/><text transform="translate(1183.5,940) scale(0.95,1)" font-size="14" fill="#ffffff" text-anchor="middle" font-weight="700" >100W</text><path d="M1265.3,946 L1265.3,874 Q1265.3,869.6 1269.7,869.6 L1321,869.6 Q1325,869.6 1325,874 L1325,946 Z" fill="url(#navg)"/><line x1="1265.3" y1="891.8" x2="1325" y2="891.8" stroke="#5a5a5a" stroke-width="1.2" /><path d="M1265.3,946 L1265.3,892.5 L1325,892.5 L1325,946 Z" fill="#8a8a8a"/><circle cx="1295.4" cy="880.5" r="9" fill="url(#icg2)"/><path d="M1290.5,883.5 L1295.4,877.5 L1300.3,883.5 Z" fill="#333"/><rect x="1276.5" y="901.5" width="37.5" height="36.5" rx="4" fill="#b4b4b4" stroke="#2a2a2a" stroke-width="2.5"/><rect x="1287" y="910.7" width="17.5" height="17.5" fill="#000"/><rect x="1327.0" y="869" width="56.90000000000009" height="37.6" fill="url(#navg)"/><circle cx="1355.45" cy="888.2" r="12" fill="url(#icg2)"/><rect x="1384.9" y="869" width="55.19999999999982" height="37.6" fill="url(#navg)"/><circle cx="1412.5" cy="888.2" r="12" fill="url(#icg2)"/><rect x="1441.1" y="869" width="55.200000000000045" height="37.6" fill="url(#navg)"/><circle cx="1468.6999999999998" cy="888.2" r="12" fill="url(#icg2)"/><rect x="1497.3" y="869" width="55.700000000000045" height="37.6" fill="url(#navg)"/><circle cx="1525.15" cy="888.2" r="12" fill="url(#icg2)"/><rect x="1554.0" y="869" width="54.799999999999955" height="37.6" fill="url(#navg)"/><circle cx="1581.4" cy="888.2" r="12" fill="url(#icg2)"/><rect x="1350.45" y="883" width="10" height="10" fill="#333"/><path d="M1408.5,882 L1418.5,888.2 L1408.5,894.4 Z" fill="#333"/><path d="M1464.1999999999998,881.5 L1461.6999999999998,881.5 L1461.6999999999998,895 L1464.1999999999998,895 M1473.1999999999998,881.5 L1475.6999999999998,881.5 L1475.6999999999998,895 L1473.1999999999998,895" fill="none" stroke="#333" stroke-width="2"/><circle cx="1466.6999999999998" cy="888.2" r="1" fill="#333"/><circle cx="1470.6999999999998" cy="888.2" r="1" fill="#333"/><path d="M1525.15,888 C1528.15,883.5 1534.65,883.5 1534.65,888 C1534.65,892.5 1528.15,892.5 1525.15,888 C1522.15,883.5 1515.65,883.5 1515.65,888 C1515.65,892.5 1522.15,892.5 1525.15,888 Z" fill="none" stroke="#333" stroke-width="2.1"/><path d="M1575.4,887 A6,6 0 0 1 1586.4,884 M1587.4,889.5 A6,6 0 0 1 1576.4,892.5" fill="none" stroke="#333" stroke-width="2.4"/><path d="M1583.4,881 L1588.4,885 L1583.4,887 Z M1579.4,890 L1574.4,892 L1579.4,896 Z" fill="#333"/><rect x="1327" y="908.6" width="169.3" height="40" fill="url(#navg)"/><rect x="1497.5" y="908.6" width="160" height="40" fill="url(#navg)"/><circle cx="1365.3" cy="927.7" r="12" fill="url(#icg2)"/><circle cx="1631.5" cy="927.7" r="12" fill="url(#icg2)"/><path d="M1364,921.5 L1358.5,927.7 L1364,933.9 M1369.5,921.5 L1364,927.7 L1369.5,933.9" fill="none" stroke="#333" stroke-width="1.9"/><path d="M1627,921.5 L1632.5,927.7 L1627,933.9 M1632.5,921.5 L1638,927.7 L1632.5,933.9" fill="none" stroke="#333" stroke-width="1.9"/><text x="1398.8" y="937" font-size="27" fill="#333333" text-anchor="start" textLength="62.6" lengthAdjust="spacingAndGlyphs" stroke="#333" stroke-width="0.9">Back</text><text x="1532.7" y="937" font-size="27" fill="#333333" text-anchor="start" textLength="64" lengthAdjust="spacingAndGlyphs" stroke="#333" stroke-width="0.9">Next</text><g transform="translate(1637,887)" stroke="#8a0000" stroke-width="8" stroke-linecap="butt"><line x1="0" y1="-17" x2="0" y2="17"/><line x1="-14.7" y1="-8.5" x2="14.7" y2="8.5"/><line x1="-14.7" y1="8.5" x2="14.7" y2="-8.5"/></g><g transform="translate(1637,887)" stroke="#e81010" stroke-width="6.4" stroke-linecap="butt"><line x1="0" y1="-16.3" x2="0" y2="16.3"/><line x1="-14.1" y1="-8.15" x2="14.1" y2="8.15"/><line x1="-14.1" y1="8.15" x2="14.1" y2="-8.15"/></g>
<rect x="1017.7" y="89.6" width="638.3" height="491.69999999999993" fill="#232323"/><g id="fb76" clip-path="url(#plotclip)"><g clip-path="url(#locclip)"><path d="M1291.2,567.3 L1291.0,567.3 L1290.8,567.6 L1290.4,567.6 L1290.0,567.8 L1289.5,567.8 L1288.8,567.8 L1287.9,567.9 L1286.3,567.1 L1283.5,565.2 L1279.8,562.4 L1274.4,558.0 L1267.6,552.2 L1259.1,545.1 L1247.8,535.9 L1234.3,524.5 L1217.6,509.5 L1197.6,489.2 L1171.1,457.2 L1139.8,413.4 L1105.9,359.0 L1073.2,300.1 L1047.7,243.6 L1030.4,195.9 L1021.4,160.5 L1019.2,135.8 L1022.6,118.9 L1030.8,108.1 L1042.3,102.6 L1056.0,100.6 L1071.0,100.1 L1086.2,100.3 L1102.1,101.0 L1119.2,102.3 L1137.7,104.0 L1158.1,106.0 L1180.8,108.4 L1205.8,111.2 L1233.5,114.4 L1263.9,117.9 L1297.1,121.7 L1332.9,125.8 L1370.8,130.1 L1409.7,134.6 L1447.4,139.0 L1484.1,143.2 L1517.4,147.0 L1546.8,150.4 L1571.8,153.3 L1592.7,155.6 L1610.4,157.7 L1625.7,159.5 L1638.6,161.0 L1649.1,162.1 L1657.2,163.1 L1663.6,163.8 L1668.3,164.3 L1671.4,164.7 L1673.9,165.0 L1675.9,165.2 L1677.9,165.5 L1681.6,165.9 Z" fill="url(#fbA)"/><path d="M1040.9,-236.4 L1286.3,795.4 L900.0,795.4 L900.0,-236.4 Z" fill="url(#fbA)"/><path d="M999.5,632.2 L1751.3,-30.5 L1751.3,700.0 L999.5,700.0 Z" fill="url(#fbB)"/><path d="M911.0,86.2 L1758.1,171.6 L1758.1,0.0 L911.0,0.0 Z" fill="url(#fbC)"/></g><path d="M1228.4,197.2 L1122.7,107.6 L1235.7,118.9 Z" fill="url(#fbF0)"/><path d="M1228.4,197.2 L1235.7,118.9 L1546.3,150.3 Z" fill="url(#fbF1)"/><path d="M1228.4,197.2 L1546.3,150.3 L1363.3,311.5 Z" fill="url(#fbF2)"/><path d="M1228.4,197.2 L1363.3,311.5 L1204.5,451.5 Z" fill="url(#fbF3)"/><path d="M1228.4,197.2 L1204.5,451.5 L1146.9,209.2 Z" fill="url(#fbF4)"/><path d="M1228.4,197.2 L1146.9,209.2 L1122.7,107.6 Z" fill="url(#fbF5)"/><g clip-path="url(#triclip)"><circle cx="1228.4" cy="197.2" r="110" fill="url(#fbW)"/></g></g><g id="fb31"><rect x="637" y="648" width="340" height="197" fill="url(#fb31a)"/><rect x="637" y="648" width="340" height="197" fill="url(#fb31b)"/></g></svg>
<canvas id="cie76" width="638" height="491" style="left:1018px;top:90px"></canvas>
<canvas id="cie31" width="340" height="197" style="left:637px;top:648px"></canvas>
<svg width="1656" height="946" viewBox="0 0 1656 946"><rect x="1401.7" y="549.2" width="252.1" height="27.2" fill="#2e2e2e" /><text x="1403" y="570.7" font-size="20.5" fill="#f2f2f2" text-anchor="start" textLength="154.5" lengthAdjust="spacingAndGlyphs" >Gamut Coverage:</text><text x="1570" y="570.7" font-size="20.5" fill="#f2f2f2" text-anchor="start" textLength="54" lengthAdjust="spacingAndGlyphs" >72,4%</text><g clip-path="url(#cieclip)"><rect x="1539.7" y="143.7" width="13.2" height="13.2" fill="none" stroke="#ffffff" stroke-width="1.6"/><rect x="1116.1" y="101.0" width="13.2" height="13.2" fill="none" stroke="#ffffff" stroke-width="1.6"/><rect x="1197.9" y="444.9" width="13.2" height="13.2" fill="none" stroke="#ffffff" stroke-width="1.6"/><rect x="1140.3" y="202.6" width="13.2" height="13.2" fill="none" stroke="#ffffff" stroke-width="1.6"/><rect x="1356.7" y="304.9" width="13.2" height="13.2" fill="none" stroke="#ffffff" stroke-width="1.6"/><rect x="1229.1" y="112.3" width="13.2" height="13.2" fill="none" stroke="#ffffff" stroke-width="1.6"/><circle cx="1492.3" cy="153.3" r="4.3" fill="#cc0000" stroke="#111" stroke-width="1.3"/><circle cx="1151.1" cy="119.5" r="4.3" fill="#00c000" stroke="#111" stroke-width="1.3"/><circle cx="1201.5" cy="449.4" r="4.3" fill="#0000c0" stroke="#111" stroke-width="1.3"/><circle cx="1164.6" cy="205.0" r="4.3" fill="#00b0b8" stroke="#111" stroke-width="1.3"/><circle cx="1335.3" cy="308.7" r="4.3" fill="#c000c0" stroke="#111" stroke-width="1.3"/><circle cx="1232.6" cy="127.5" r="4.3" fill="#c0c000" stroke="#111" stroke-width="1.3"/><rect x="1221.8" y="190.6" width="13.2" height="13.2" fill="none" stroke="#000" stroke-width="2"/><circle cx="1225.9" cy="195.1" r="4.3" fill="#ffffff" stroke="#111" stroke-width="1.1"/></g><line x1="1017.7" y1="89.6" x2="1656" y2="89.6" stroke="#a0a0a0" stroke-width="1.3" /><line x1="1017.7" y1="89.6" x2="1017.7" y2="581.3" stroke="#a0a0a0" stroke-width="1.3" /><line x1="1017.7" y1="581.3" x2="1656" y2="581.3" stroke="#a0a0a0" stroke-width="1.3" /><rect x="798.8" y="738.7" width="14.3" height="13.4" fill="none" stroke="#000" stroke-width="1.6"/><circle cx="801.4" cy="726.5" r="4" fill="#bdbdbd" stroke="#000" stroke-width="1.2"/><circle cx="811.1" cy="724.9" r="4.4" fill="#ffffff" stroke="#000" stroke-width="1.2"/></svg>
<script>
(function(){
var Minv=[[2.4934969,-0.9313836,-0.4027108],[-0.8294890,1.7626641,0.0236247],[0.0358458,-0.0761724,0.9568845]];
function col(x,y,dimOut,gam){
  var X=x/y, Z=(1-x-y)/y;
  var r=Minv[0][0]*X+Minv[0][1]+Minv[0][2]*Z;
  var g=Minv[1][0]*X+Minv[1][1]+Minv[1][2]*Z;
  var b=Minv[2][0]*X+Minv[2][1]+Minv[2][2]*Z;
  var mn=Math.min(r,g,b), out=false;
  if(mn<0){out=true; if(1){r=Math.max(r,0);g=Math.max(g,0);b=Math.max(b,0);} else {r-=mn;g-=mn;b-=mn;}}
  var mx=Math.max(r,g,b); r/=mx; g/=mx; b/=mx;
  if(gam!=1){r=Math.pow(r,gam);g=Math.pow(g,gam);b=Math.pow(b,gam);}
  var k=out?dimOut:1;
  return [r*255*k,g*255*k,b*255*k];
}
var c=document.getElementById('cie76');
if(c&&c.getContext){ var f1=document.getElementById('fb76'); if(f1) f1.style.display='none';
 var W=c.width,H=c.height,ctx=c.getContext('2d');
 var id=ctx.createImageData(W,H),d=id.data;
 for(var j=0;j<H;j++){for(var i=0;i<W;i++){
   var u=(i+0.5+0.2999999999999545)/1065.0, v=(580.9-(j+0.5+90))/819.4;
   var den=6*u-16*v+12, x=9*u/den, y=4*v/den;
   var p=col(x,y,0.6,1), o=(j*W+i)*4;
   d[o]=p[0];d[o+1]=p[1];d[o+2]=p[2];d[o+3]=255;
 }}
 var tmp=document.createElement('canvas');tmp.width=W;tmp.height=H;tmp.getContext('2d').putImageData(id,0,0);
 var L=[[273.20,477.30],[273.02,477.30],[272.78,477.57],[272.43,477.57],[272.02,477.84],[271.49,477.85],[270.78,477.85],[269.89,477.85],[268.30,477.06],[265.54,475.23],[261.82,472.36],[256.43,468.00],[249.64,462.21],[241.06,455.11],[229.80,445.88],[216.26,434.54],[199.62,419.52],[179.65,399.17],[153.14,367.18],[121.85,323.44],[87.90,268.98],[55.22,210.10],[29.69,153.57],[12.36,105.91],[3.40,70.49],[1.23,45.83],[4.64,28.89],[12.78,18.13],[24.32,12.64],[38.05,10.62],[53.01,10.11],[68.22,10.30],[84.07,11.05],[101.16,12.28],[119.73,13.95],[140.13,16.01],[162.75,18.44],[187.76,21.24],[215.46,24.36],[245.90,27.85],[279.10,31.67],[314.90,35.80],[352.78,40.14],[391.68,44.63],[429.40,48.97],[466.11,53.19],[499.37,56.98],[528.76,60.37],[553.77,63.26],[574.71,65.65],[592.38,67.69],[607.69,69.46],[620.63,70.95],[631.10,72.13],[639.23,73.07],[645.55,73.80],[650.29,74.34],[653.37,74.70],[655.91,74.99],[657.90,75.22],[659.89,75.45],[663.61,75.88]];
 ctx.beginPath();ctx.moveTo(L[0][0],L[0][1]);var n=L.length;
 for(var k=0;k<n-1;k++){var p0=L[Math.max(k-1,0)],p1=L[k],p2=L[k+1],p3=L[Math.min(k+2,n-1)];
   ctx.bezierCurveTo(p1[0]+(p2[0]-p0[0])/6,p1[1]+(p2[1]-p0[1])/6,p2[0]-(p3[0]-p1[0])/6,p2[1]-(p3[1]-p1[1])/6,p2[0],p2[1]);}
 ctx.closePath();
 ctx.fillStyle='#000';ctx.fill();
 ctx.globalCompositeOperation='source-in';ctx.drawImage(tmp,0,0);
}
var c2=document.getElementById('cie31');
if(c2&&c2.getContext){ var f2=document.getElementById('fb31'); if(f2) f2.style.display='none';
 var W2=c2.width,H2=c2.height,ctx2=c2.getContext('2d');
 var id2=ctx2.createImageData(W2,H2),d2=id2.data;
 for(var j=0;j<H2;j++){for(var i=0;i<W2;i++){
   var x=0.2863+(i+0.5)/W2*0.0524, y=0.3595-(j+0.5)/H2*0.061;
   var p=col(x,y,1,1), o=(j*W2+i)*4;
   d2[o]=p[0];d2[o+1]=p[1];d2[o+2]=p[2];d2[o+3]=255;
 }}
 ctx2.putImageData(id2,0,0);
}
})();
</script>
</body></html>
